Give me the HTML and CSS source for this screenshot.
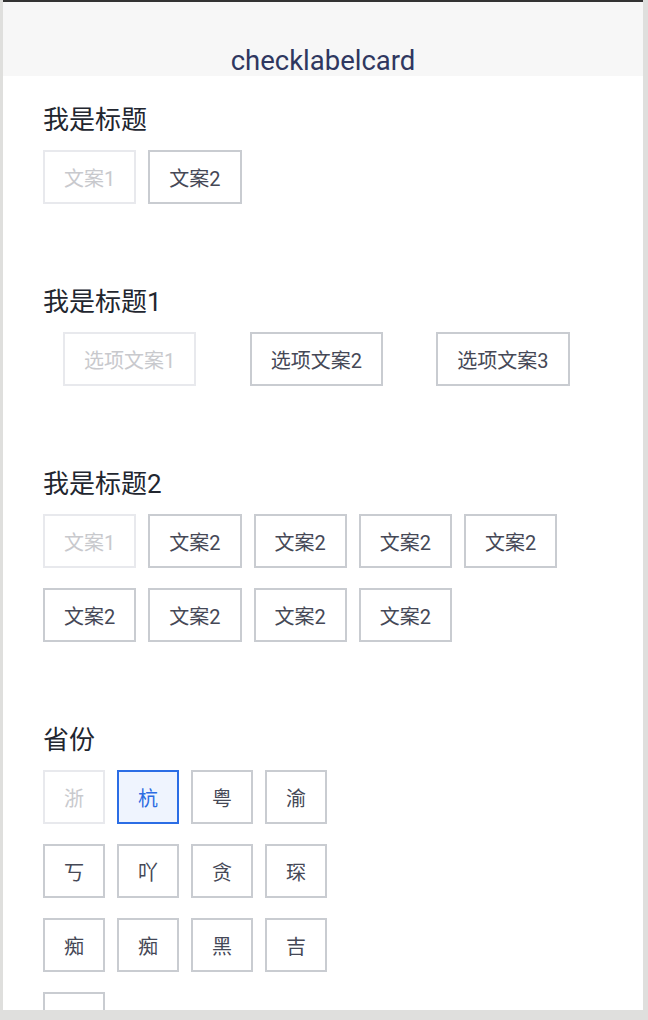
FILE: index.html
```html
<!DOCTYPE html>
<html lang="zh-CN">
<head>
<meta charset="utf-8">
<title>checklabelcard</title>
<link rel="stylesheet" href="styles.css">
</head>
<body>
<div class="screen">
  <header class="nav"><span class="nav-title">checklabelcard</span></header>
  <main class="content">
    <section class="group">
      <h2 class="group-title">我是标题</h2>
      <div class="tags">
        <span class="tag is-disabled">文案1</span>
        <span class="tag">文案2</span>
      </div>
    </section>
    <section class="group">
      <h2 class="group-title">我是标题1</h2>
      <div class="tags tags-cols">
        <div class="cell"><span class="tag is-disabled">选项文案1</span></div>
        <div class="cell"><span class="tag">选项文案2</span></div>
        <div class="cell"><span class="tag">选项文案3</span></div>
      </div>
    </section>
    <section class="group">
      <h2 class="group-title">我是标题2</h2>
      <div class="tags">
        <span class="tag is-disabled">文案1</span>
        <span class="tag">文案2</span>
        <span class="tag">文案2</span>
        <span class="tag">文案2</span>
        <span class="tag">文案2</span>
        <span class="tag">文案2</span>
        <span class="tag">文案2</span>
        <span class="tag">文案2</span>
        <span class="tag">文案2</span>
      </div>
    </section>
    <section class="group">
      <h2 class="group-title">省份</h2>
      <div class="tags tags-grid">
        <span class="tag tag-sq is-disabled">浙</span>
        <span class="tag tag-sq is-checked">杭</span>
        <span class="tag tag-sq">粤</span>
        <span class="tag tag-sq">渝</span>
        <span class="tag tag-sq">丂</span>
        <span class="tag tag-sq">吖</span>
        <span class="tag tag-sq">贪</span>
        <span class="tag tag-sq">琛</span>
        <span class="tag tag-sq">痴</span>
        <span class="tag tag-sq">痴</span>
        <span class="tag tag-sq">黑</span>
        <span class="tag tag-sq">吉</span>
        <span class="tag tag-sq">辽</span>
      </div>
    </section>
  </main>
</div>
</body>
</html>
```

FILE: styles.css
```css
html, body {
  margin: 0;
  padding: 0;
}
body {
  background: #dfdfdd;
  height: 1020px;
  overflow: hidden;
  font-family: "Roboto", "Noto Sans CJK SC", sans-serif;
}
.screen {
  margin-left: 3px;
  width: 640px;
  height: 1008px;
  border-top: 2px solid #333333;
  background: #ffffff;
  overflow: hidden;
}
.nav {
  height: 74px;
  box-sizing: border-box;
  padding-top: 44px;
  background: #f7f7f7;
  text-align: center;
}
.nav-title {
  display: block;
  font-family: "Roboto", sans-serif;
  font-size: 27.5px;
  line-height: 30px;
  color: #2f3760;
}
.content {
  padding: 29px 40px 0;
}
.group + .group {
  margin-top: 83px;
}
.group-title {
  margin: 0 0 15px;
  font-size: 26px;
  line-height: 30px;
  font-weight: 400;
  color: #22262f;
}
.tags {
  display: flex;
  flex-wrap: wrap;
  gap: 20px 12px;
}
.tags-cols {
  display: grid;
  grid-template-columns: repeat(3, 1fr);
  gap: 20px 0;
}
.cell {
  padding-left: 20px;
  display: flex;
}
.tags-grid {
  display: grid;
  grid-template-columns: repeat(4, 62px);
  gap: 20px 12px;
}
.tag {
  box-sizing: border-box;
  height: 54px;
  padding: 0 19px;
  display: inline-flex;
  align-items: center;
  justify-content: center;
  border: 2px solid #c9ccd1;
  background: #ffffff;
  font-size: 20px;
  color: #454856;
  white-space: nowrap;
}
.tag-sq {
  width: 62px;
  padding: 0;
}
.tag.is-disabled {
  border-color: #e8e9ed;
  color: #c8c9cd;
}
.tag.is-checked {
  border-color: #2b6de5;
  background: #eff4fe;
  color: #2c6be2;
}
```
